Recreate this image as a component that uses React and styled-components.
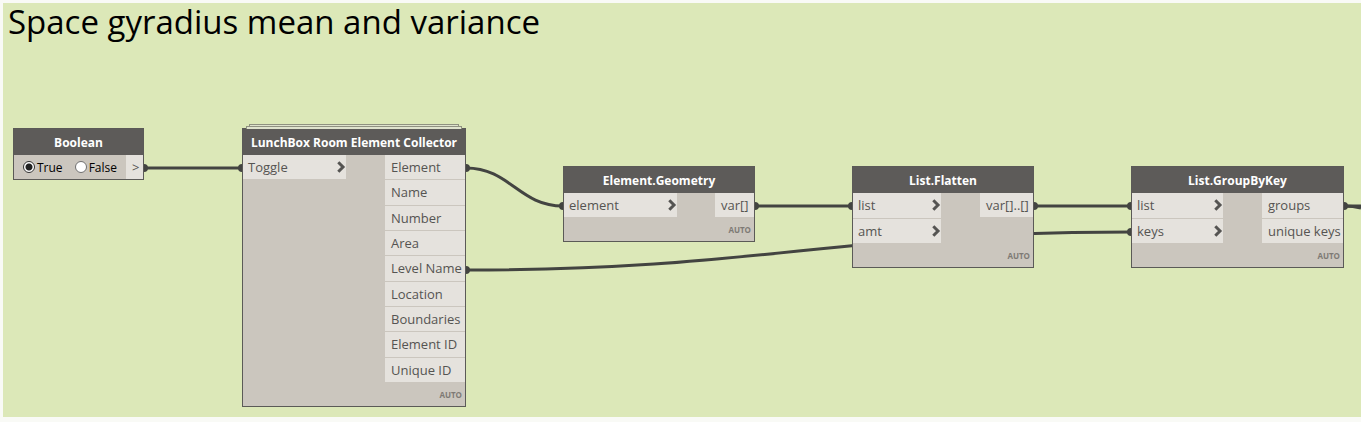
import React from "react";
import styled, { createGlobalStyle } from "styled-components";

const GlobalStyle = createGlobalStyle`
  body {
    margin: 0;
    background: #f9faf6;
    font-family: "Open Sans", "Noto Sans", sans-serif;
  }
`;

const Workspace = styled.main`
  padding: 3px 0 5px 3px;
`;

const Group = styled.section`
  position: relative;
  min-height: 414px;
  background: #dce8b8;
`;

const GroupTitle = styled.h1`
  margin: 0;
  padding: 0 5px;
  font-size: 33px;
  font-weight: 400;
  line-height: 38px;
  color: #000;
`;

const Wires = styled.svg`
  position: absolute;
  inset: 0;
  width: 100%;
  height: 100%;
  fill: none;
  stroke: #434441;
  stroke-width: 3;

  circle {
    fill: #434441;
    stroke: none;
  }
`;

const NodeFrame = styled.article`
  position: absolute;
  left: ${(p) => p.$x}px;
  top: ${(p) => p.$y}px;
  width: ${(p) => p.$width}px;
  box-sizing: border-box;
  border: 1px solid #5b5a57;
  background: #cbc6be;
  color: #555452;
`;

const Sheet = styled.span`
  position: absolute;
  left: ${(p) => p.$inset}px;
  right: ${(p) => p.$inset}px;
  top: ${(p) => p.$top}px;
  height: 2px;
  border: 1px solid #8f9180;
  border-bottom: 0;
  background: #dfe3cd;
`;

const NodeTitle = styled.h2`
  position: relative;
  margin: 0;
  height: 26px;
  background: #5d5b59;
  color: #fff;
  font-size: 12px;
  font-weight: 700;
  line-height: 27px;
  text-align: center;
  white-space: nowrap;
`;

const Ports = styled.div`
  display: flex;
  justify-content: space-between;
  align-items: flex-start;
`;

const PortList = styled.ul`
  display: grid;
  grid-template-columns: minmax(0, 1fr);
  grid-auto-rows: minmax(24px, 1fr);
  gap: 1px;
  width: ${(p) => p.$width}px;
  min-height: ${(p) => p.$minHeight || 24}px;
  margin: 0;
  padding: 0;
  list-style: none;
`;

const Port = styled.li`
  display: flex;
  align-items: center;
  justify-content: space-between;
  padding-left: 6px;
  background: #e5e2dd;
  font-size: 13px;
  line-height: 24px;
  white-space: nowrap;
`;

const InputPort = styled(Port)`
  padding-left: 5px;
`;

const Lacing = styled.footer`
  height: 24px;
  padding-right: 3px;
  color: #7e7a75;
  font-size: 8px;
  font-weight: 700;
  line-height: 26px;
  text-align: right;
`;

const Choices = styled.fieldset`
  display: flex;
  gap: 12px;
  margin: 0;
  padding: 0 0 0 9px;
  border: 0;
`;

const Choice = styled.label`
  display: flex;
  align-items: center;
  gap: 2px;
  height: 24px;
  color: #000;
  font-size: 12px;
`;

const Radio = styled.input`
  appearance: none;
  box-sizing: border-box;
  width: 12px;
  height: 12px;
  margin: 0;
  border: 1px solid #6f6f6f;
  border-radius: 50%;
  background: #fff;

  &:checked {
    border-color: #333;
    background: radial-gradient(circle, #212121 3px, #fff 4px);
  }
`;

const Arrow = styled.svg`
  width: 9px;
  height: 12px;
  fill: none;
  stroke: #555452;
  stroke-width: 3;
`;

function Chevron() {
  return (
    <Arrow viewBox="0 0 9 12" aria-hidden="true">
      <path d="M1.3 1.3 6 6 1.3 10.7" />
    </Arrow>
  );
}

const nodes = [
  {
    title: "LunchBox Room Element Collector",
    x: 239, y: 125, width: 224, inputWidth: 103, outputWidth: 80, outputsHeight: 227, stacked: true,
    inputs: ["Toggle"],
    outputs: ["Element", "Name", "Number", "Area", "Level Name", "Location", "Boundaries", "Element ID", "Unique ID"],
  },
  {
    title: "Element.Geometry",
    x: 560, y: 163, width: 192, inputWidth: 113, outputWidth: 39,
    inputs: ["element"], outputs: ["var[]"],
  },
  {
    title: "List.Flatten",
    x: 849, y: 163, width: 182, inputWidth: 88, outputWidth: 53, inputsHeight: 50,
    inputs: ["list", "amt"], outputs: ["var[]..[]"],
  },
  {
    title: "List.GroupByKey",
    x: 1128, y: 163, width: 213, inputWidth: 91, outputWidth: 81, inputsHeight: 50, outputsHeight: 50,
    inputs: ["list", "keys"], outputs: ["groups", "unique keys"],
  },
];

const wires = [
  "M141 165H239",
  "M463 165C507 165 516 203 560 203",
  "M752 203H849",
  "M463 267C762 267 829 229 1128 229",
  "M1031 203H1128",
  "M1341 203H1500",
  "M1341 203C1348 203 1354 204 1358 205",
];

const joints = [
  [141, 165], [239, 165], [463, 165], [560, 203], [752, 203], [849, 203],
  [463, 267], [1031, 203], [1128, 203], [1128, 229], [1341, 203],
];

function BooleanNode() {
  return (
    <NodeFrame $x={10} $y={125} $width={131}>
      <NodeTitle>Boolean</NodeTitle>
      <Ports>
        <Choices aria-label="Boolean">
          <Choice>
            <Radio type="radio" name="boolean" defaultChecked />
            True
          </Choice>
          <Choice>
            <Radio type="radio" name="boolean" />
            False
          </Choice>
        </Choices>
        <PortList $width={17}>
          <Port>&gt;</Port>
        </PortList>
      </Ports>
    </NodeFrame>
  );
}

function GraphNode({
  title, x, y, width, inputWidth, outputWidth, inputsHeight, outputsHeight, stacked, inputs, outputs,
}) {
  return (
    <NodeFrame $x={x} $y={y} $width={width}>
      {stacked && (
        <>
          <Sheet $inset={6} $top={-5} />
          <Sheet $inset={3} $top={-3} />
        </>
      )}
      <NodeTitle>{title}</NodeTitle>
      <Ports>
        <PortList $width={inputWidth} $minHeight={inputsHeight}>
          {inputs.map((name) => (
            <InputPort key={name}>
              {name}
              <Chevron />
            </InputPort>
          ))}
        </PortList>
        <PortList $width={outputWidth} $minHeight={outputsHeight}>
          {outputs.map((name) => (
            <Port key={name}>{name}</Port>
          ))}
        </PortList>
      </Ports>
      <Lacing>AUTO</Lacing>
    </NodeFrame>
  );
}

export default function App() {
  return (
    <>
      <GlobalStyle />
      <Workspace>
        <Group>
          <GroupTitle>Space gyradius mean and variance</GroupTitle>
          <Wires aria-hidden="true">
            {wires.map((d) => (
              <path key={d} d={d} />
            ))}
            {joints.map(([cx, cy]) => (
              <circle key={`${cx}-${cy}`} cx={cx} cy={cy} r="4" />
            ))}
          </Wires>
          <BooleanNode />
          {nodes.map((node) => (
            <GraphNode key={node.title} {...node} />
          ))}
        </Group>
      </Workspace>
    </>
  );
}
